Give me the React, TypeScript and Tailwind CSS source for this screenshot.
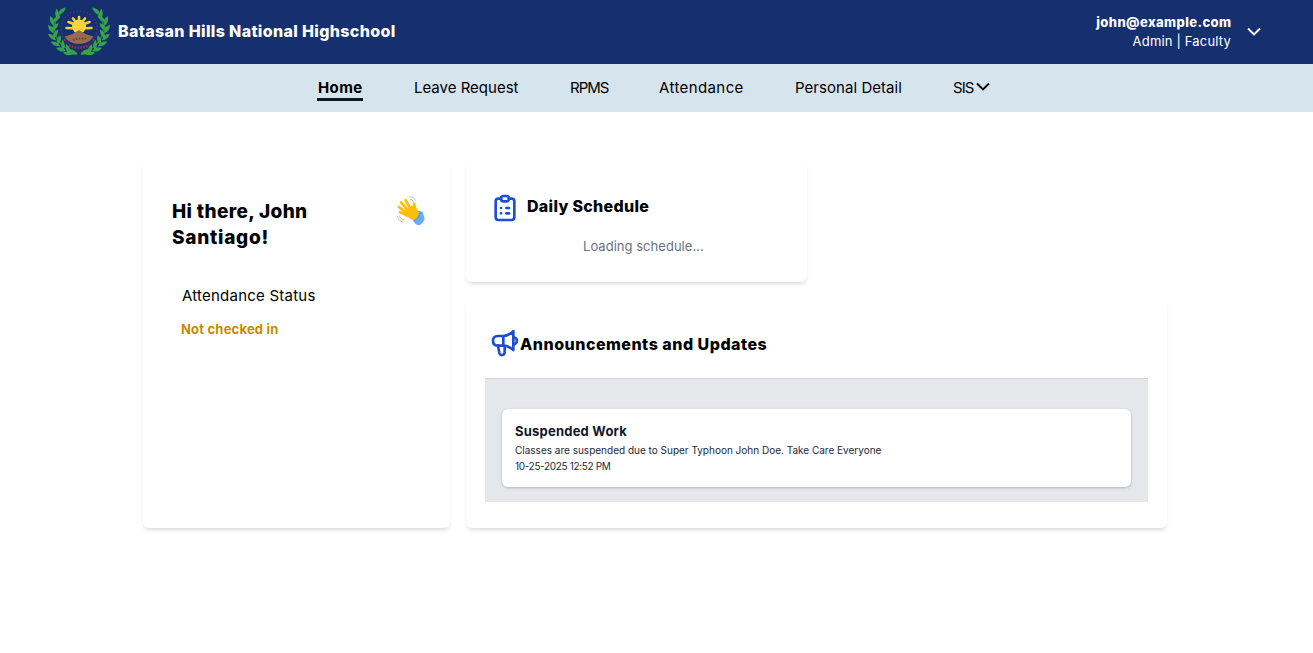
import { TbClipboardList } from "react-icons/tb";

function Leaf({ x, y, a }: { x: number; y: number; a: number }) {
  return <path d="M-5.2 0Q0 -4 5.2 0Q0 3.6 -5.2 0Z" transform={`translate(${x} ${y}) rotate(${a})`} fill="#35a34a" />;
}

const leaves = [
  [14, 5, -42], [9, 8, 85], [8.5, 13, -38], [4, 15, 70], [7, 21, -45], [3, 23, 55],
  [7.5, 28, -60], [4, 31, 40], [11, 34, -75], [7.5, 38, 25], [15, 39, -95], [13, 43.5, 18],
  [20, 43, -110], [20, 47.5, 8], [25, 46, -150],
];

function Branch() {
  return (
    <g>
      <path d="M14 6C2 17 3 38 29 47.5" fill="none" stroke="#2b8f42" strokeWidth="1.3" />
      {leaves.map(([x, y, a]) => <Leaf key={`${x}-${y}`} x={x} y={y} a={a} />)}
    </g>
  );
}

function Logo() {
  return (
    <svg width="62" height="50" viewBox="0 0 62 50" className="mb-[3px] shrink-0">
      <Branch />
      <g transform="translate(62 0) scale(-1 1)"><Branch /></g>
      <circle cx="31" cy="23" r="18" fill="none" stroke="#33397a" strokeWidth="2" strokeDasharray="1.6 1.8" />
      <path d="M21 39.5Q31 44 41 39.5" fill="none" stroke="#8c3050" strokeWidth="2.4" strokeDasharray="1.8 1.1" />
      <circle cx="16.5" cy="34" r="1" fill="#b0304a" />
      <circle cx="45.5" cy="34" r="1" fill="#b0304a" />
      <g stroke="#f5cf3a" strokeWidth="2.6" strokeLinecap="round">
        <path d="M31 20V11M31 20L25 12.500M31 20L37 12.500M31 20L20.500 16M31 20L41.500 16M31 22.500L18.500 22M31 22.500L43.500 22" />
      </g>
      <circle cx="31" cy="20.500" r="7" fill="#fdd23a" />
      <path d="M16.500 30.500Q24 29 31 24Q38 29 45.500 30.500Q41 38 31 38Q21 38 16.500 30.500Z" fill="#9a6a4c" />
      <path d="M25 34Q31 31.500 38 33" fill="none" stroke="#6d4038" strokeWidth="2" strokeDasharray="1.500 1.500" />
    </svg>
  );
}

function Wave() {
  return (
    <svg width="28" height="30" viewBox="0 0 84 90" className="-mt-[3px] -mr-1 shrink-0">
      <path d="M46 71L56 85L66 88Q77 84 83 70L77 47L64 45Z" fill="#6aaafc" />
      <path d="M49 67Q62 62 65 45L70 47Q70 66 54 74Z" fill="#549af5" />
      <g fill="none" stroke="#ffbf00" strokeWidth="8.500" strokeLinecap="round">
        <path d="M42 42L26 13" /><path d="M35 46L13 20" /><path d="M32 53L6 33" /><path d="M34 60L9 48" /><path d="M55 40L51 23" />
      </g>
      <path d="M27 40L45 28L60 39L66 51Q64 65 51 73Q35 69 27 55Z" fill="#ffbf00" />
      <g fill="none" stroke="#b8a3c6" strokeWidth="2.500" strokeLinecap="round">
        <path d="M39 3Q50 0 55 13" /><path d="M41 10Q47 9 49 17" /><path d="M2 62Q5 76 17 78" /><path d="M8 60Q9 69 21 72" />
      </g>
    </svg>
  );
}

function Megaphone() {
  return (
    <svg width="40" height="40" viewBox="0 0 120 120" fill="none" stroke="#1d4ed8" strokeWidth="8" strokeLinejoin="round" strokeLinecap="round" className="shrink-0">
      <path d="M55 42H39C27 42 24 49 24 56S28 71 40 71H55Q70 71 85 84V27Q76 39 55 42V71" />
      <path d="M85 45Q96 49 96 56T85 68" />
      <path d="M39 71L43 93Q45 100 51 99Q58 99 59 91V72" />
    </svg>
  );
}

function Chevron() {
  return (
    <svg width="14" height="9" viewBox="0 0 14 9" fill="none" stroke="currentColor" strokeWidth="1.900" className="shrink-0">
      <path d="M1 1.500L7 7.500L13 1.500" />
    </svg>
  );
}

export default function App() {
  return (
    <div className="h-[653px] w-full overflow-hidden bg-white font-['Inter',sans-serif] text-black">
      <header className="flex h-16 items-center bg-[#16306f] pr-[52px] pl-12 text-white">
        <Logo />
        <h1 className="ml-2 pb-0.5 text-base font-extrabold tracking-[0.35px] whitespace-nowrap">Batasan Hills National Highschool</h1>
        <div className="ml-auto flex flex-col items-end text-[13px] leading-[19px] whitespace-nowrap">
          <span className="-mr-[0.5px] font-extrabold tracking-[0.4px]">john@example.com</span>
          <span className="tracking-[0.18px]">Admin | Faculty</span>
        </div>
        <div className="ml-4 pb-0.5"><Chevron /></div>
      </header>
      <nav className="flex h-12 items-center bg-[#d6e4ee] pl-[317px] text-[15px] whitespace-nowrap">
        <a className="w-[46px] border-b-[3px] border-[#0f172a] pt-0.5 pl-px leading-[21px] font-bold tracking-[0.4px] shadow-[0_0_0_1px_#dfe3e8]">Home</a>
        <a className="ml-[51px] w-[104px]">Leave Request</a>
        <a className="ml-[52px] w-[38px] tracking-[-1px]">RPMS</a>
        <a className="ml-[51px] w-[85px] tracking-[0.4px]">Attendance</a>
        <a className="ml-[51px] w-[107px] tracking-[0.05px]">Personal Detail</a>
        <a className="ml-[51px] flex items-center"><span className="mr-0.5 tracking-[-0.9px]">SIS</span><span className="pb-[3px]"><Chevron /></span></a>
      </nav>
      <main className="grid grid-cols-[307px_701px] gap-4 pt-12 pl-[143px]">
        <section className="h-[368px] rounded-md px-[29px] pt-[38px] shadow-[0_4px_5px_-2px_rgba(0,0,0,0.11),0_2px_4px_-1px_rgba(0,0,0,0.06)]">
          <div className="flex justify-between pt-px">
            <h2 className="text-[19px] leading-[26px] font-extrabold"><span className="tracking-[0.35px]">Hi there, John</span><br /><span className="tracking-[0.75px]">Santiago!</span></h2>
            <Wave />
          </div>
          <p className="mt-[33px] ml-[10px] text-[15px] leading-6 tracking-[0.23px]">Attendance Status</p>
          <p className="mt-[11px] ml-[9px] text-[13px] leading-5 font-bold tracking-[0.2px] text-[#ca8a04]">Not checked in</p>
        </section>
        <div className="flex flex-col gap-4">
          <section className="h-[122px] w-[341px] rounded-md pt-8 shadow-[0_4px_5px_-2px_rgba(0,0,0,0.11),0_2px_4px_-1px_rgba(0,0,0,0.06)]">
            <div className="flex items-center gap-[6px] pl-[23px]">
              <TbClipboardList size={32} color="#1d4ed8" />
              <h3 className="pb-1 text-base font-extrabold tracking-[0.3px]">Daily Schedule</h3>
            </div>
            <p className="mt-3 pl-[117px] text-[13px] leading-5 tracking-[0.03px] text-gray-500">Loading schedule...</p>
          </section>
          <section className="h-[230px] rounded-md px-[19px] pt-[24px] shadow-[0_4px_5px_-2px_rgba(0,0,0,0.11),0_2px_4px_-1px_rgba(0,0,0,0.06)]">
            <div className="flex h-10 items-center">
              <Megaphone />
              <h3 className="-ml-[5px] pt-[3px] text-base font-extrabold tracking-[0.5px]">Announcements and Updates</h3>
            </div>
            <div className="mt-4 h-[124px] border-t border-gray-300 bg-gray-200 px-[17px] pt-[30px]">
              <article className="h-[78px] rounded-md bg-white px-[13px] pt-[11px] shadow-[0_1px_3px_rgba(0,0,0,0.22)]">
                <h4 className="text-[13px] leading-[22px] font-bold tracking-[0.22px] text-gray-900">Suspended Work</h4>
                <p className="text-[10px] leading-4 text-gray-800">Classes are suspended due to Super Typhoon John Doe. Take Care Everyone</p>
                <p className="text-[10px] leading-4 tracking-[-0.34px] text-gray-800">10-25-2025 12:52 PM</p>
              </article>
            </div>
          </section>
        </div>
      </main>
    </div>
  );
}
